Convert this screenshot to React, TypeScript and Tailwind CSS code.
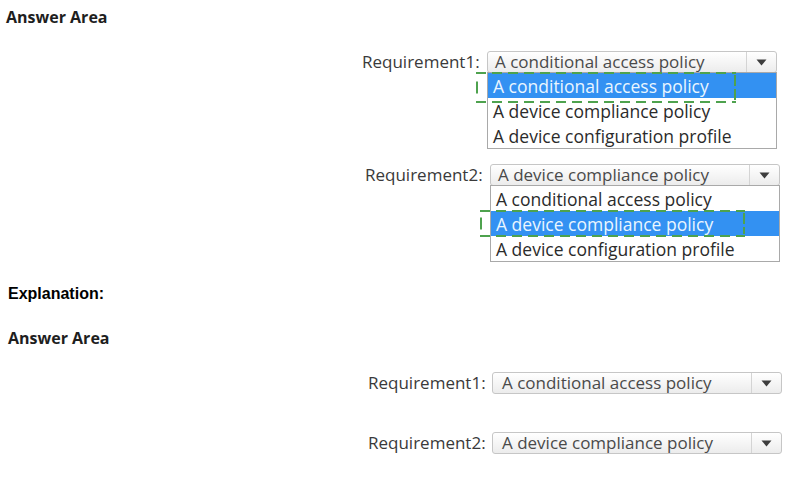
import React from "react";

const ui = { fontFamily: '"Open Sans", "Noto Sans", sans-serif' };
const arial = { fontFamily: '"Liberation Sans", Arial, sans-serif' };

function Arrow() {
  return (
    <svg width="11" height="7" viewBox="0 0 11 7">
      <path d="M0.5 0.5 L10.5 0.5 L5.5 6.5 Z" fill="#3d3d3d" />
    </svg>
  );
}

function Select({ value, pl = "pl-[7px]" }: { value: string; pl?: string }) {
  return (
    <div className="flex h-[22px] w-[290px] items-center rounded-[3px] border border-[#c6c6c6] bg-gradient-to-b from-white to-[#ececec]">
      <div className={`flex-1 ${pl} text-[17px] leading-[20px] text-[#4a4a4a] whitespace-nowrap`}>{value}</div>
      <div className="flex h-full w-[30px] items-center justify-center border-l border-[#d4d4d4]">
        <Arrow />
      </div>
    </div>
  );
}

const OPTIONS = ["A conditional access policy", "A device compliance policy", "A device configuration profile"];

function List({ selected, box }: { selected: number; box: { l: number; t: number; w: number; h: number } }) {
  return (
    <div className="relative -mt-px w-[290px] border border-[#a9a9a9] bg-white">
      {OPTIONS.map((o, i) => (
        <div
          key={o}
          className={`flex h-[25px] items-center pl-[5px] text-[17.5px] leading-[22px] whitespace-nowrap ${
            i === selected ? "bg-[#3391f2] text-[#eaf6ff]" : "text-[#2b2b2b]"
          }`}
        >
          {o}
        </div>
      ))}
      <svg
        className="absolute pointer-events-none"
        style={{ left: box.l, top: box.t, width: box.w, height: box.h }}
        width={box.w}
        height={box.h}
      >
        <line x1="0" y1="1" x2={box.w} y2="1" stroke="#4ea24e" strokeWidth="2" strokeDasharray="10 6" />
        <line x1="0" y1={box.h - 1} x2={box.w} y2={box.h - 1} stroke="#4ea24e" strokeWidth="2" strokeDasharray="10 6" />
        <line x1="1" y1={box.h / 2 - 6} x2="1" y2={box.h / 2 + 6} stroke="#4ea24e" strokeWidth="2" />
        <line x1={box.w - 1} y1="3" x2={box.w - 1} y2={box.h - 3} stroke="#4ea24e" strokeWidth="2" strokeDasharray="11 3" />
      </svg>
    </div>
  );
}

export default function App() {
  return (
    <div className="w-[798px] h-[478px] bg-white overflow-hidden" style={ui}>
      <div className="pt-[7px] pl-[6px] text-[16px] font-bold leading-[20px] text-[#1e1e1e]">Answer Area</div>

      <div className="mt-[24px] ml-[362px] flex">
        <div className="pt-[1px] text-[17px] leading-[20px] text-[#3a3a3a] w-[125px] whitespace-nowrap">Requirement1:</div>
        <div>
          <Select value="A conditional access policy" />
          <List selected={0} box={{ l: -12, t: -1, w: 260, h: 31 }} />
        </div>
      </div>

      <div className="mt-[15px] ml-[365px] flex">
        <div className="pt-[1px] text-[17px] leading-[20px] text-[#3a3a3a] w-[125px] whitespace-nowrap">Requirement2:</div>
        <div>
          <Select value="A device compliance policy" />
          <List selected={1} box={{ l: -11, t: 24, w: 265, h: 27 }} />
        </div>
      </div>

      <div className="mt-[22px] pl-[8px] text-[16px] font-bold leading-[20px] text-black" style={arial}>
        Explanation:
      </div>

      <div className="mt-[24px] pl-[8px] text-[16px] font-bold leading-[20px] text-[#1e1e1e]">Answer Area</div>

      <div className="mt-[24px] ml-[368px] flex items-center">
        <div className="text-[17px] leading-[20px] text-[#3a3a3a] w-[124px] whitespace-nowrap">Requirement1:</div>
        <Select value="A conditional access policy" pl="pl-[9px]" />
      </div>

      <div className="mt-[38px] ml-[368px] flex items-center">
        <div className="text-[17px] leading-[20px] text-[#3a3a3a] w-[124px] whitespace-nowrap">Requirement2:</div>
        <Select value="A device compliance policy" pl="pl-[9px]" />
      </div>
    </div>
  );
}
